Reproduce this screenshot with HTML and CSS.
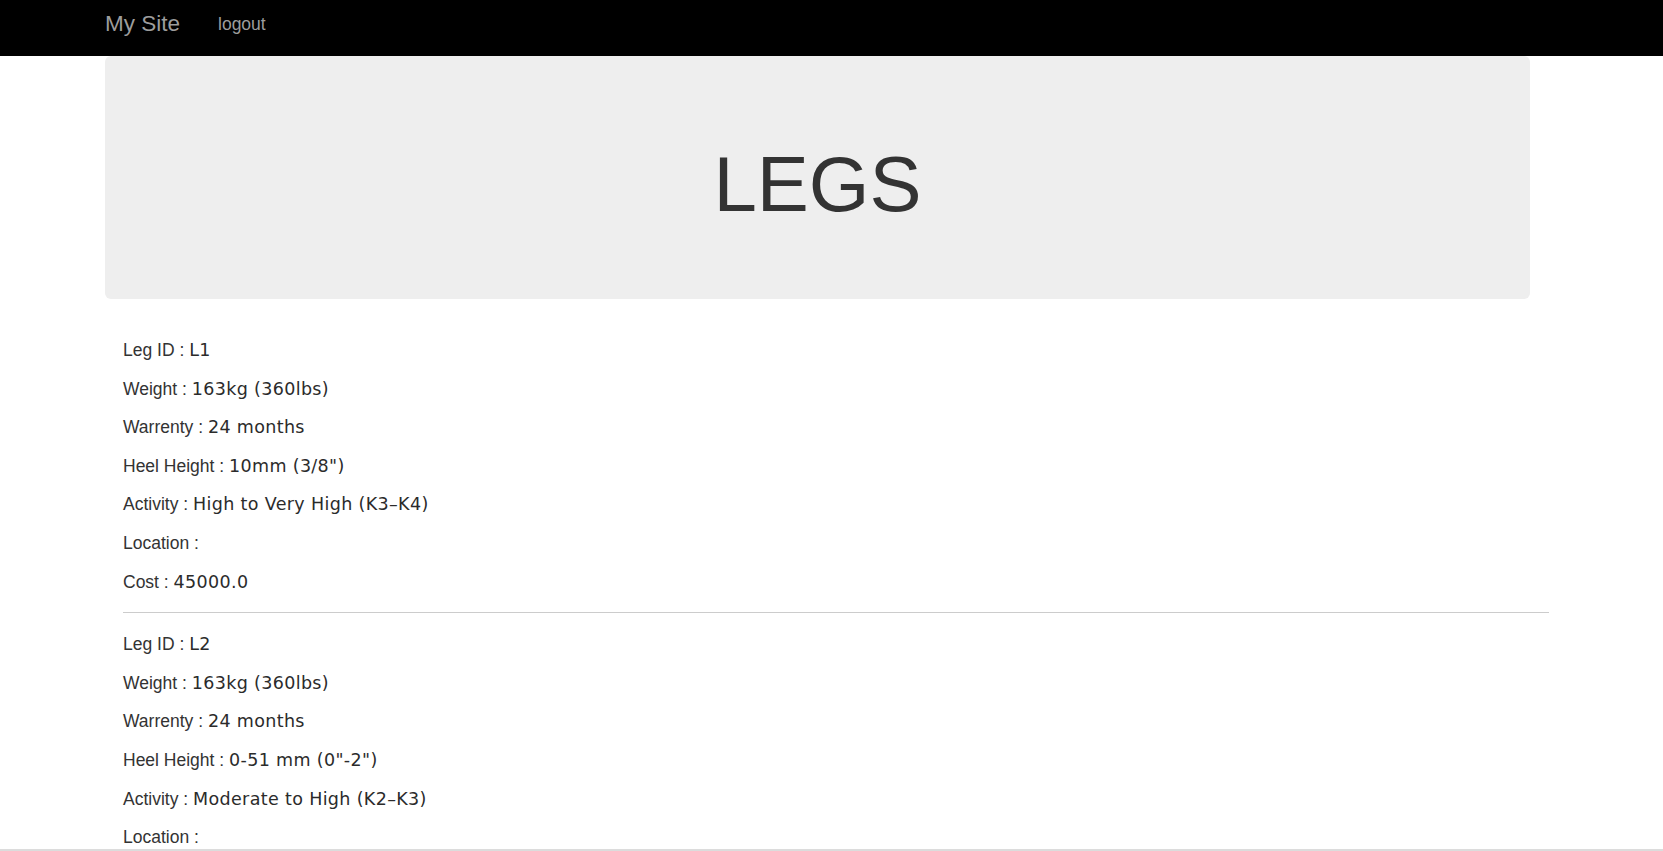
FILE: index.html
```html
<!DOCTYPE html>
<html>
<head>
<meta charset="utf-8">
<title>Legs</title>
<link rel="stylesheet" href="styles.css">
</head>
<body>
<nav class="navbar">
  <a class="brand" href="#">My Site</a>
  <a class="nav-link" href="#">logout</a>
</nav>
<div class="jumbotron">
  <h1>LEGS</h1>
</div>
<div class="list">
  <p><span class="label">Leg ID : </span><span class="value">L1</span></p>
  <p><span class="label">Weight : </span><span class="value">163kg (360lbs)</span></p>
  <p><span class="label">Warrenty : </span><span class="value">24 months</span></p>
  <p><span class="label">Heel Height : </span><span class="value">10mm (3/8")</span></p>
  <p><span class="label">Activity : </span><span class="value">High to Very High (K3–K4)</span></p>
  <p><span class="label">Location : </span><span class="value"></span></p>
  <p><span class="label">Cost : </span><span class="value">45000.0</span></p>
  <hr>
  <p><span class="label">Leg ID : </span><span class="value">L2</span></p>
  <p><span class="label">Weight : </span><span class="value">163kg (360lbs)</span></p>
  <p><span class="label">Warrenty : </span><span class="value">24 months</span></p>
  <p><span class="label">Heel Height : </span><span class="value">0-51 mm (0"-2")</span></p>
  <p><span class="label">Activity : </span><span class="value">Moderate to High (K2–K3)</span></p>
  <p><span class="label">Location : </span><span class="value"></span></p>
  <p><span class="label">Cost : </span><span class="value">45000.0</span></p>
  <hr>
</div>
<div class="bottom-bar"></div>
</body>
</html>
```
FILE: styles.css
```css
html, body {
  margin: 0;
  padding: 0;
}
body {
  font-family: "Liberation Sans", Arial, sans-serif;
  color: #333;
  background: #fff;
}
.navbar {
  height: 56px;
  background: #000;
  display: flex;
  align-items: flex-start;
  padding-left: 105px;
  box-sizing: border-box;
}
.brand {
  display: block;
  font-size: 22.5px;
  line-height: 26px;
  margin-top: 11px;
  color: #9d9d9d;
  text-decoration: none;
}
.nav-link {
  display: block;
  font-size: 17.5px;
  line-height: 20px;
  margin-top: 14px;
  margin-left: 38px;
  color: #9d9d9d;
  text-decoration: none;
}
.jumbotron {
  margin-left: 105px;
  width: 1425px;
  box-sizing: border-box;
  background: #eee;
  border-radius: 6px;
  padding: 85px 0 72px;
  text-align: center;
}
.jumbotron h1 {
  margin: 0;
  font-size: 78px;
  line-height: 86px;
  font-weight: normal;
  color: #333;
}
.list {
  margin-left: 123px;
  width: 1426px;
  padding-top: 40px;
}
.list p {
  margin: 0 0 16px;
  line-height: 22.6px;
  font-size: 17.5px;
}
.label {
  font-family: "Liberation Sans", Arial, sans-serif;
  font-size: 17.5px;
}
.value {
  font-family: "DejaVu Sans", Verdana, sans-serif;
  font-size: 17.5px;
  letter-spacing: 0.35px;
  line-height: 17px;
  color: #2b2b2b;
}
.list hr {
  margin: 19px 0 20px;
  border: 0;
  border-top: 1px solid #ccc;
  height: 0;
}
.bottom-bar {
  position: fixed;
  left: 0;
  right: 0;
  bottom: 0;
  height: 2px;
  background: #dcdcdc;
}
```
